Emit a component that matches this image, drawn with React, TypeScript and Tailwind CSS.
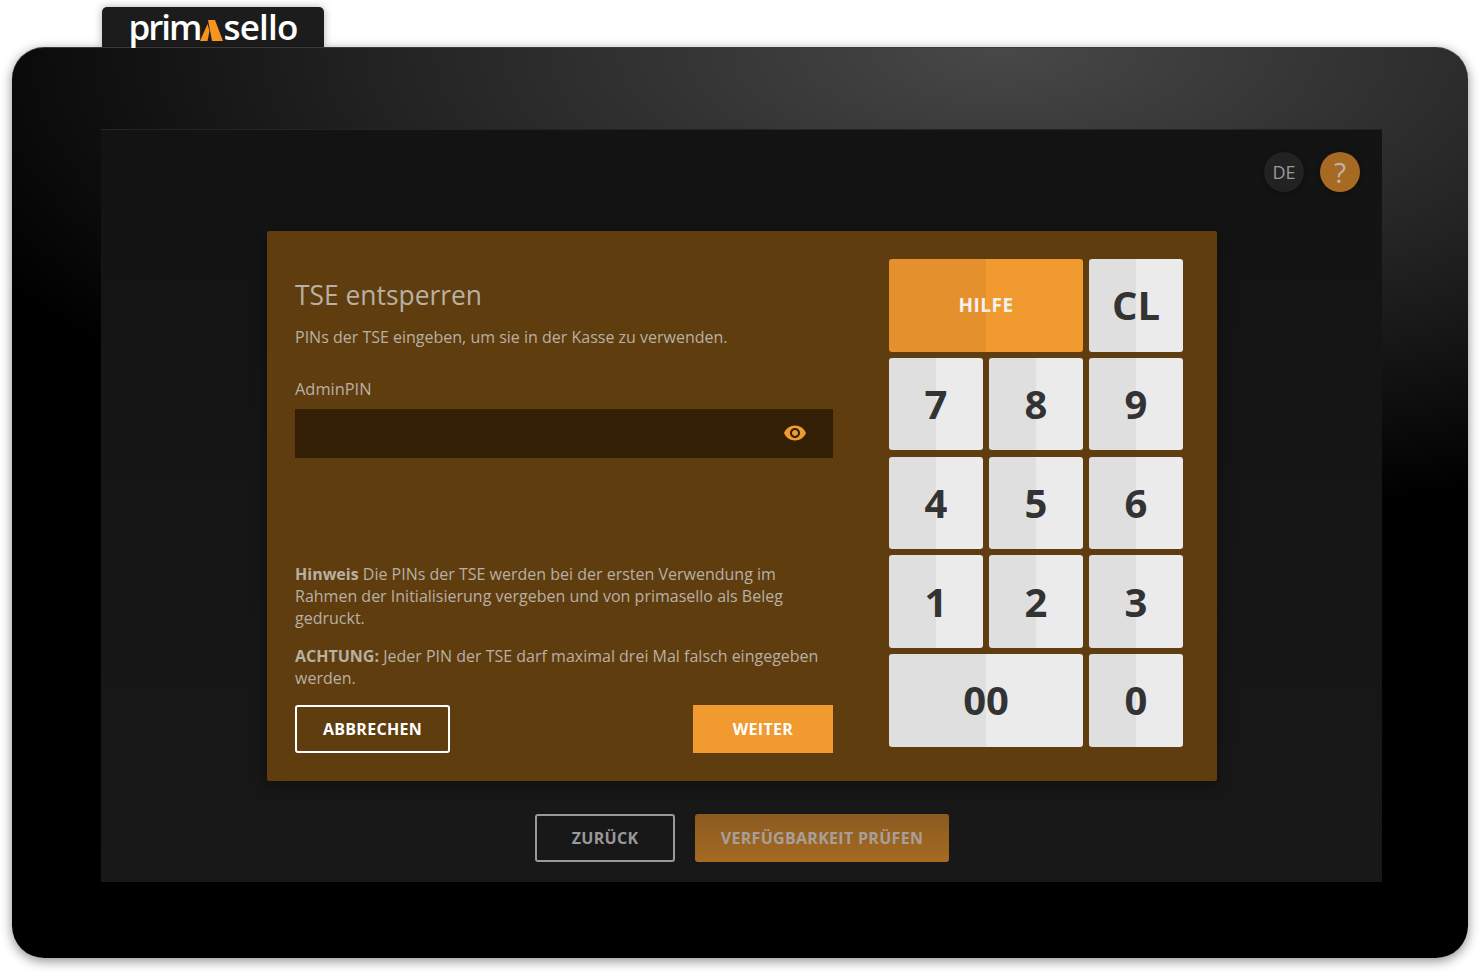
import React from 'react';

const keys = [
  { label: 'HILFE', wide: true, help: true },
  { label: 'CL' },
  { label: '7' },
  { label: '8' },
  { label: '9' },
  { label: '4' },
  { label: '5' },
  { label: '6' },
  { label: '1' },
  { label: '2' },
  { label: '3' },
  { label: '00', wide: true },
  { label: '0' },
];

function Logo() {
  return (
    <div className="ml-[102px] mt-[7px] flex h-[40px] w-[222px] items-start justify-center rounded-t-[5px] bg-[#1c1c1c] shadow-[0_0_8px_rgba(0,0,0,0.3)]">
      <span className="flex items-center text-[35px] font-semibold leading-[40px] text-white">
        <span className="tracking-[-2px]">prim</span>
        <svg width="23" height="21" viewBox="0 0 23 21" className="mt-[6px]">
          <path d="M7.5 4 L9.5 11 L7.5 21 L0 21 Z" fill="#f7941d" />
          <path d="M8 0 L15 0 L23 21 L12 21 Z" fill="#f7941d" />
        </svg>
        <span className="tracking-[-0.8px]">sello</span>
      </span>
    </div>
  );
}

function Keypad() {
  return (
    <div className="grid grid-cols-[94px_94px_94px] auto-rows-[92.6px] gap-x-[6px] gap-y-[6.2px]">
      {keys.map(k => (
        <button
          key={k.label}
          className={
            k.help
              ? 'col-span-2 rounded-[3px] bg-[linear-gradient(90deg,#e4912d_50%,#f09a2f_50%)] text-[19px] font-bold tracking-[0.5px] text-[#f5f0ea]'
              : `${k.wide ? 'col-span-2 ' : ''}rounded-[3px] bg-[linear-gradient(90deg,#dfdfdf_50%,#ebebeb_50%)] text-[40px] font-bold text-[#333333]`
          }
        >
          {k.label}
        </button>
      ))}
    </div>
  );
}

function UnlockDialog() {
  return (
    <div className="ml-[166px] mt-[39px] flex h-[550px] w-[950px] rounded-[2px] bg-[#5f3d0f] pl-[28px] pr-[34px] pt-[28px] shadow-[0_4px_16px_rgba(0,0,0,0.4)]">
      <div className="flex h-[494px] w-[538px] flex-col text-[16px] leading-[22px] text-[#b8b0a3]">
        <h1 className="mt-[19px] text-[26.4px] leading-[34px]">TSE entsperren</h1>
        <p className="mt-[14px]">PINs der TSE eingeben, um sie in der Kasse zu verwenden.</p>
        <label className="mt-[30px] text-[16.4px]">AdminPIN</label>
        <div className="mt-[9px] flex h-[49px] items-center justify-end bg-[#321f05] pb-[1px] pr-[26px]">
          <svg width="24" height="24" viewBox="0 0 24 24" fill="#f09a2f">
            <path d="M12 4.5C7 4.5 2.73 7.61 1 12c1.73 4.39 6 7.5 11 7.5s9.27-3.11 11-7.5c-1.73-4.39-6-7.5-11-7.5zM12 17c-2.76 0-5-2.24-5-5s2.24-5 5-5 5 2.24 5 5-2.24 5-5 5zm0-8c-1.66 0-3 1.34-3 3s1.34 3 3 3 3-1.34 3-3-1.34-3-3-3z" />
          </svg>
        </div>
        <p className="mt-auto">
          <b className="font-bold">Hinweis</b> Die PINs der TSE werden bei der ersten Verwendung im Rahmen der
          Initialisierung vergeben und von primasello als Beleg gedruckt.
        </p>
        <p className="mt-[16px]">
          <b className="font-bold">ACHTUNG:</b> Jeder PIN der TSE darf maximal drei Mal falsch eingegeben werden.
        </p>
        <div className="mt-[16px] flex justify-between">
          <button className="h-[48px] w-[155px] rounded-[3px] border-2 border-white text-[16px] font-bold tracking-[0.3px] text-white">
            ABBRECHEN
          </button>
          <button className="h-[48px] w-[140px] bg-[#f09a2f] text-[16px] font-bold tracking-[0.3px] text-white">
            WEITER
          </button>
        </div>
      </div>
      <div className="ml-[56px]">
        <Keypad />
      </div>
    </div>
  );
}

export default function App() {
  return (
    <div className="h-[975px] w-[1480px] overflow-hidden bg-white font-['Open_Sans',sans-serif]">
      <Logo />
      <div className="ml-[12px] h-[911px] w-[1456px] overflow-hidden rounded-[32px] border-t border-[#3a3a3a] bg-[radial-gradient(ellipse_1150px_480px_at_68%_0%,#484848_0%,#222222_55%,#000000_100%)] pl-[89px] pt-[81px] shadow-[0_3px_12px_rgba(0,0,0,0.45)]">
        <div className="h-[753px] w-[1281px] border-t border-[#242424] bg-[linear-gradient(#131313,#181818)]">
          <div className="flex justify-end gap-[16px] pr-[22px] pt-[22px]">
            <div className="flex h-[40px] w-[40px] items-center justify-center rounded-full bg-[#222222] text-[18px] text-[#999999] shadow-[0_1px_4px_rgba(0,0,0,0.4)]">
              DE
            </div>
            <div className="flex h-[40px] w-[40px] items-center justify-center rounded-full bg-[#a66a22] text-[28px] text-[#bfb5a5] shadow-[0_1px_4px_rgba(0,0,0,0.4)]">
              ?
            </div>
          </div>
          <UnlockDialog />
          <div className="ml-[434px] mt-[33px] flex gap-[20px]">
            <button className="h-[48px] w-[140px] rounded-[3px] border-2 border-[#999999] text-[16px] font-bold tracking-[0.3px] text-[#999999]">
              ZURÜCK
            </button>
            <button className="h-[48px] w-[254px] rounded-[3px] bg-[linear-gradient(#8b5a20,#a66a22)] text-[16px] font-bold tracking-[0.3px] text-[#a8a098]">
              VERFÜGBARKEIT PRÜFEN
            </button>
          </div>
        </div>
      </div>
    </div>
  );
}
